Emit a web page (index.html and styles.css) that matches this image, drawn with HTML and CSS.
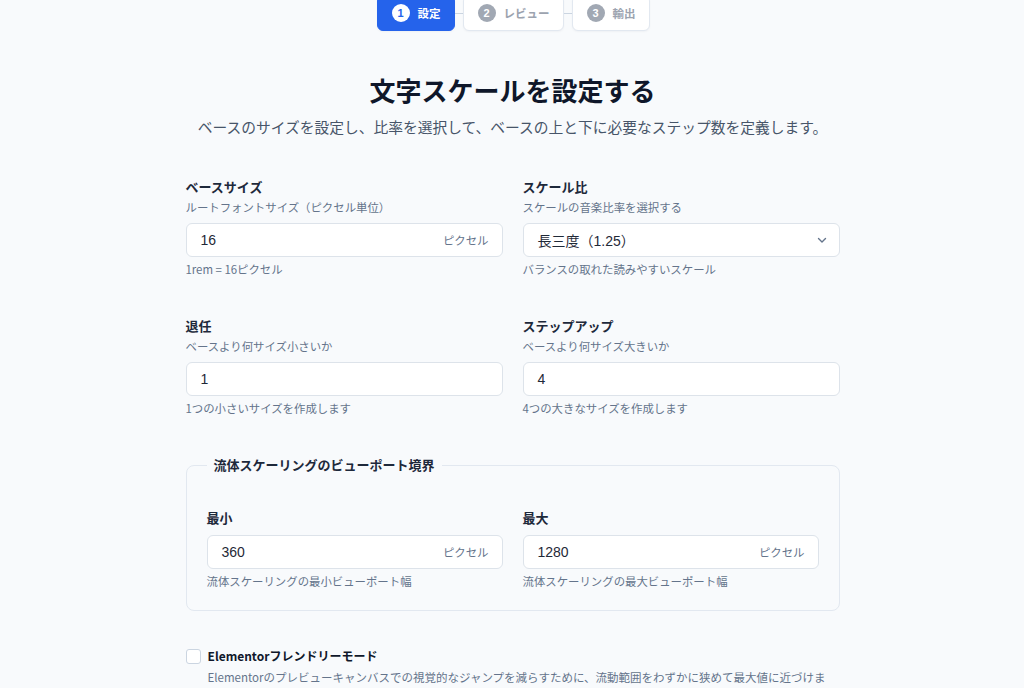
FILE: index.html
```html
<!DOCTYPE html>
<html lang="ja">
<head>
<meta charset="utf-8">
<title>文字スケールを設定する</title>
<link rel="stylesheet" href="styles.css">
</head>
<body>
<div class="page">
  <nav class="stepper">
    <div class="step active"><span class="num">1</span><span class="step-label">設定</span></div>
    <span class="connector"></span>
    <div class="step"><span class="num">2</span><span class="step-label">レビュー</span></div>
    <span class="connector"></span>
    <div class="step"><span class="num">3</span><span class="step-label">輸出</span></div>
  </nav>

  <header class="intro">
    <h1 class="title">文字スケールを設定する</h1>
    <p class="subtitle">ベースのサイズを設定し、比率を選択して、ベースの上と下に必要なステップ数を定義します。</p>
  </header>

  <main class="form">
    <div class="grid">
      <div class="field">
        <div class="label">ベースサイズ</div>
        <div class="desc">ルートフォントサイズ（ピクセル単位）</div>
        <div class="input"><span class="value">16</span><span class="suffix">ピクセル</span></div>
        <div class="help">1rem = 16ピクセル</div>
      </div>
      <div class="field">
        <div class="label">スケール比</div>
        <div class="desc">スケールの音楽比率を選択する</div>
        <div class="input"><span class="value">長三度（1.25）</span>
          <svg class="chevron" width="12" height="12" viewBox="0 0 12 12"><path d="M2.5 4.5 L6 8 L9.5 4.5" fill="none" stroke="#64748b" stroke-width="1.4" stroke-linecap="round" stroke-linejoin="round"/></svg>
        </div>
        <div class="help">バランスの取れた読みやすいスケール</div>
      </div>
      <div class="field">
        <div class="label">退任</div>
        <div class="desc">ベースより何サイズ小さいか</div>
        <div class="input"><span class="value">1</span></div>
        <div class="help">1つの小さいサイズを作成します</div>
      </div>
      <div class="field">
        <div class="label">ステップアップ</div>
        <div class="desc">ベースより何サイズ大きいか</div>
        <div class="input"><span class="value">4</span></div>
        <div class="help">4つの大きなサイズを作成します</div>
      </div>
    </div>

    <fieldset class="bounds">
      <legend class="legend">流体スケーリングのビューポート境界</legend>
      <div class="grid inner">
        <div class="field">
          <div class="label">最小</div>
          <div class="input"><span class="value">360</span><span class="suffix">ピクセル</span></div>
          <div class="help">流体スケーリングの最小ビューポート幅</div>
        </div>
        <div class="field">
          <div class="label">最大</div>
          <div class="input"><span class="value">1280</span><span class="suffix">ピクセル</span></div>
          <div class="help">流体スケーリングの最大ビューポート幅</div>
        </div>
      </div>
    </fieldset>

    <div class="check">
      <span class="box"></span>
      <div class="check-text">
        <div class="check-label">Elementorフレンドリーモード</div>
        <div class="check-desc">Elementorのプレビューキャンバスでの視覚的なジャンプを減らすために、流動範囲をわずかに狭めて最大値に近づけます。</div>
      </div>
    </div>
  </main>
</div>
</body>
</html>
```

FILE: styles.css
```css
html, body {
  margin: 0;
  padding: 0;
  background: #f8fafc;
}
body {
  font-family: "Noto Sans CJK JP", "Noto Sans", sans-serif;
  color: #1e293b;
  overflow: hidden;
}
.page {
  width: 654px;
  margin: 0 auto;
  padding-left: 1px;
}
.stepper {
  display: flex;
  justify-content: center;
  align-items: center;
  margin-top: -5px;
  margin-left: 1px;
}
.step {
  display: flex;
  align-items: center;
  gap: 8px;
  height: 34px;
  padding: 0 13px 0 14px;
  border: 1px solid #e2e8f0;
  border-radius: 6px;
  background: #ffffff;
  color: #9ca3af;
  font-size: 11.5px;
  font-weight: 700;
  box-shadow: 0 1px 2px rgba(15, 23, 42, 0.04);
}
.step.active {
  background: #2563eb;
  border-color: #2563eb;
  color: #ffffff;
}
.num {
  width: 18px;
  height: 18px;
  border-radius: 50%;
  background: #a1a8b3;
  color: #ffffff;
  font-family: "Liberation Sans", sans-serif;
  font-size: 11px;
  font-weight: 700;
  display: flex;
  align-items: center;
  justify-content: center;
}
.active .num {
  background: #ffffff;
  color: #2563eb;
}
.step-label {
  line-height: 18px;
}
.connector {
  width: 8px;
  height: 1px;
  background: #cbd5e1;
}
.intro {
  text-align: center;
  margin-top: 41px;
}
.title {
  margin: 0;
  font-size: 26px;
  line-height: 36px;
  font-weight: 700;
  color: #0f172a;
}
.subtitle {
  margin: 8px -40px 0;
  font-size: 14.75px;
  line-height: 22px;
  color: #475569;
  white-space: nowrap;
}
.form {
  margin-top: 39px;
}
.grid {
  display: grid;
  grid-template-columns: 1fr 1fr;
  column-gap: 20px;
  row-gap: 38px;
}
.field {
  display: flex;
  flex-direction: column;
}
.label {
  font-size: 13px;
  line-height: 20px;
  font-weight: 700;
  color: #1e293b;
}
.desc {
  margin-top: 1px;
  font-size: 11.4px;
  line-height: 18px;
  color: #64748b;
}
.input {
  margin-top: 7px;
  height: 34px;
  box-sizing: border-box;
  border: 1px solid #dde3ea;
  border-radius: 6px;
  background: #ffffff;
  display: flex;
  align-items: center;
  justify-content: space-between;
  padding: 0 13px 0 14px;
}
.value {
  font-family: "Liberation Sans", "Noto Sans CJK JP", sans-serif;
  font-size: 14px;
  color: #1f2937;
}
.suffix {
  font-size: 11.4px;
  color: #64748b;
}
.chevron {
  margin-right: -2px;
}
.help {
  margin-top: 3px;
  font-size: 11.4px;
  line-height: 18px;
  color: #64748b;
}
.bounds {
  margin: 38px 0 0;
  padding: 33px 20px 20px;
  border: 1px solid #e2e8f0;
  border-radius: 8px;
  min-width: 0;
}
.legend {
  padding: 0 7px;
  font-size: 13px;
  line-height: 20px;
  font-weight: 700;
  color: #1e293b;
}
.check {
  display: flex;
  align-items: flex-start;
  gap: 7px;
  margin-top: 36px;
}
.box {
  flex: none;
  width: 15px;
  height: 15px;
  box-sizing: border-box;
  border: 1px solid #cbd5e1;
  border-radius: 3px;
  background: #ffffff;
  margin-top: 2px;
}
.check-text {
  width: 620px;
}
.check-label {
  font-size: 12px;
  line-height: 18px;
  font-weight: 700;
  color: #0f172a;
}
.check-desc {
  margin-top: 3px;
  font-size: 11.5px;
  line-height: 18px;
  color: #64748b;
}
```
